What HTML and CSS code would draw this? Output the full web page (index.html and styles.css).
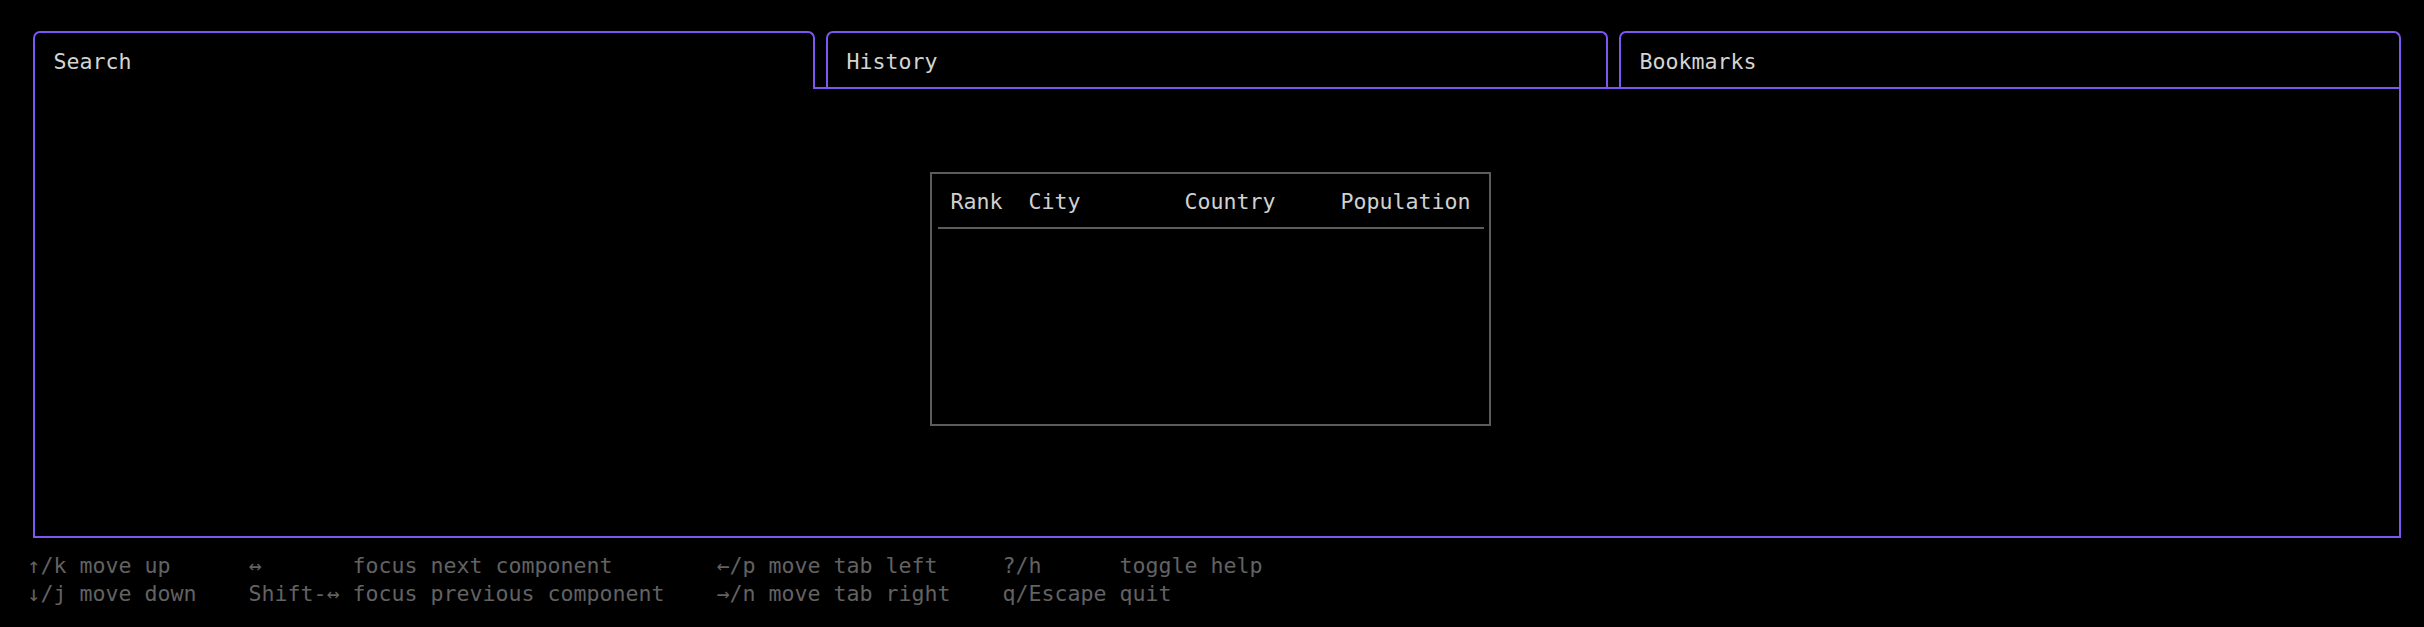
FILE: index.html
```
<!DOCTYPE html>
<html>
<head>
<meta charset="utf-8">
<link rel="stylesheet" href="styles.css">
</head>
<body>
<div class="app">
  <div class="tabs">
    <div class="tab active">Search</div>
    <div class="tab">History</div>
    <div class="tab">Bookmarks</div>
  </div>
  <div class="panel">
    <div class="table">
      <div class="thead">
        <span>Rank</span><span>City</span><span>Country</span><span>Population</span>
      </div>
    </div>
  </div>
  <div class="help">
    <div class="group">
      <span>↑/k</span><span>move up</span>
      <span>↓/j</span><span>move down</span>
    </div>
    <div class="group">
      <span>↔</span><span>focus next component</span>
      <span>Shift-↔</span><span>focus previous component</span>
    </div>
    <div class="group">
      <span>←/p</span><span>move tab left</span>
      <span>→/n</span><span>move tab right</span>
    </div>
    <div class="group">
      <span>?/h</span><span>toggle help</span>
      <span>q/Escape</span><span>quit</span>
    </div>
  </div>
</div>
</body>
</html>
```
FILE: styles.css
```
html, body {
  margin: 0;
  background: #000;
}
body {
  font-family: "DejaVu Sans Mono", monospace;
  font-size: 21.6px;
  line-height: 28px;
}
.app {
  padding: 31px 0 0 33px;
}
.tabs {
  display: flex;
  gap: 11px;
  align-items: flex-start;
  position: relative;
  z-index: 1;
}
.tab {
  box-sizing: border-box;
  width: 782px;
  height: 56px;
  border: 2px solid #7d56f4;
  border-bottom: 0;
  border-radius: 7px 7px 0 0;
  padding: 14.5px 0 0 18.5px;
  color: #d4d4d4;
  background: #000;
  white-space: pre;
}
.tab.active {
  height: 58px;
  margin-bottom: -2px;
}
.panel {
  box-sizing: border-box;
  width: 2368px;
  height: 451px;
  border: 2px solid #7d56f4;
  padding: 83px 0 0 895px;
}
.table {
  box-sizing: border-box;
  width: 561px;
  height: 254px;
  border: 2px solid #5c5c5c;
  padding: 13.8px 5.5px 0;
}
.thead {
  display: grid;
  grid-template-columns: 78px 156px 156px 156px;
  border-bottom: 2px solid #5c5c5c;
  padding-bottom: 11.5px;
  color: #d0d0d0;
}
.thead span {
  padding: 0 13px;
  white-space: pre;
}
.help {
  margin: 13.5px 0 0 -5.5px;
  display: flex;
  gap: 52px;
  color: #626262;
}
.group {
  display: grid;
  grid-template-columns: auto auto;
  column-gap: 13px;
}
.group span {
  white-space: pre;
}
```
